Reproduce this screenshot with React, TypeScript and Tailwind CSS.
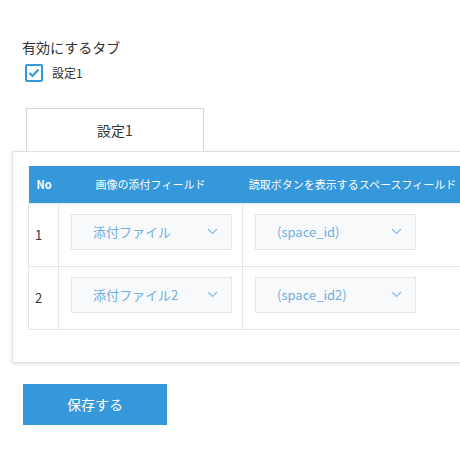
import React from "react";

const font = { fontFamily: '"Noto Sans CJK JP", "Noto Sans", sans-serif' };

function Chevron() {
  return (
    <svg width="11" height="7" viewBox="0 0 11 7" fill="none">
      <path d="M1 1l4.5 4.5L10 1" stroke="#8fbce6" strokeWidth="1.2" />
    </svg>
  );
}

function Select({ label }: { label: string }) {
  return (
    <div className="flex h-[36px] w-[161px] items-center justify-between border border-[#e3e7e8] bg-[#f7f9fa] pl-[21px] pr-[13px] text-[13px] text-[#72ade0]">
      <span>{label}</span>
      <Chevron />
    </div>
  );
}

export default function App() {
  const rows = [
    { no: "1", a: "添付ファイル", b: "(space_id)" },
    { no: "2", a: "添付ファイル2", b: "(space_id2)" },
  ];
  return (
    <div className="h-[460px] w-[460px] overflow-hidden bg-white text-[#333]" style={font}>
      <div className="pl-[22px] pt-[37px] text-[14px] leading-[20px] text-[#333]">有効にするタブ</div>
      <div className="mt-[7px] flex items-center pl-[25px]">
        <div className="flex h-[18px] w-[18px] items-center justify-center rounded-[2px] border-2 border-[#3498db] bg-white">
          <svg width="12" height="10" viewBox="0 0 12 10" fill="none">
            <path d="M1.5 5l3 3 6-6.5" stroke="#3498db" strokeWidth="2.2" />
          </svg>
        </div>
        <span className="ml-[9px] text-[12px] leading-[18px] text-[#333]">設定1</span>
      </div>
      <div className="relative z-10 ml-[26px] mt-[26px] flex h-[43px] w-[178px] items-center justify-center border border-b-0 border-[#d5d5d5] bg-white text-[14px] text-[#333]">
        設定1
      </div>
      <div className="ml-[12px] w-[480px] border border-[#e2e2e2] bg-white pl-[15px] pt-[14px] pb-[32px] shadow-[0_1px_4px_rgba(0,0,0,0.12)]">
        <table className="border-collapse text-left">
          <thead>
            <tr className="h-[37px] bg-[#3498db] text-[11px] text-white">
              <th className="w-[30px] pl-[8px] font-bold">No</th>
              <th className="w-[184px] text-center font-normal">画像の添付フィールド</th>
              <th className="w-[220px] text-center font-normal">読取ボタンを表示するスペースフィールド</th>
            </tr>
          </thead>
          <tbody>
            {rows.map((r) => (
              <tr key={r.no} className="h-[63px]">
                <td className="border border-[#e3e7e8] pl-[6px] text-[13px] text-[#333]">{r.no}</td>
                <td className="border border-[#e3e7e8] pl-[12px] pt-[10px] pb-[16px] align-top">
                  <Select label={r.a} />
                </td>
                <td className="border border-[#e3e7e8] pl-[12px] pt-[10px] pb-[16px] align-top">
                  <Select label={r.b} />
                </td>
              </tr>
            ))}
          </tbody>
        </table>
      </div>
      <button className="ml-[23px] mt-[21px] flex h-[41px] w-[144px] items-center justify-center bg-[#3498db] text-[14px] text-white">
        保存する
      </button>
    </div>
  );
}
